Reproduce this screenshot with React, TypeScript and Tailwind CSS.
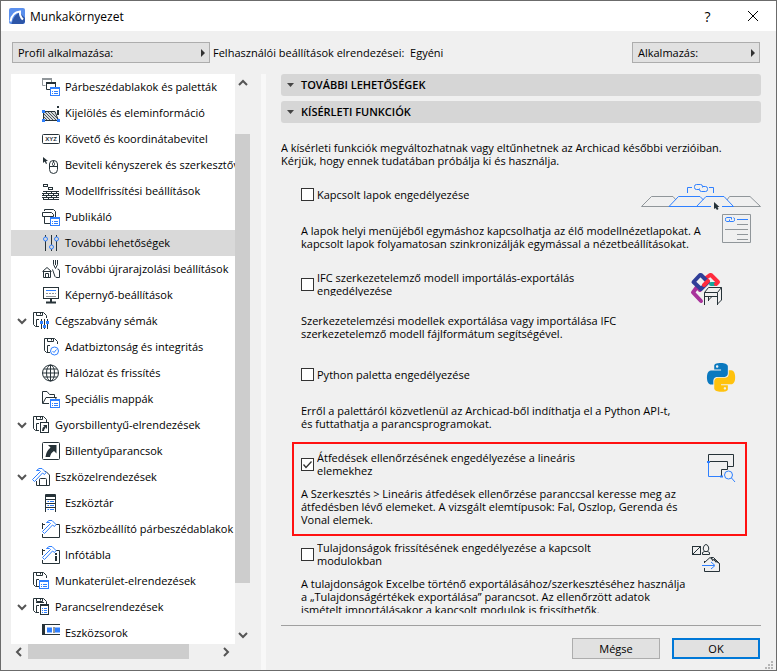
import type { ReactNode } from "react";
import clsx from "clsx";

const INK = "#263238";
const BLUE = "#2f80ff";
const GRAY = "#90969a";

function Icon({ children }: { children: ReactNode }) {
	return (
		<svg width="18" height="18" viewBox="0 0 18 18" fill="none" stroke={INK} className="shrink-0">
			{children}
		</svg>
	);
}

// shared pieces of the tree icons

const Floppy = ({ x = 1 }: { x?: number }) => (
	<g transform={`translate(${x} 0)`}>
		<path d="M6 14.5H2.5L.5 12.5V.5H10.5L13.5 3.5V6" />
		<path d="M3.5 .5V3.5H9.5V.5M7.5 1V2.5M3.5 14V7.5H6" />
	</g>
);

const MiniWindow = ({ x = 8, y = 9 }: { x?: number; y?: number }) => (
	<g transform={`translate(${x} ${y})`} stroke={BLUE}>
		<rect x=".5" y=".5" width="9" height="8" fill="#fff" />
		<path d="M0 1H10" strokeWidth="2" />
		<path d="M2 4.5H3M4 4.5H8M2 6.5H3M4 6.5H8" />
	</g>
);

const Hammer = () => (
	<path d="M4.5 2.5L7 .5H10L14 4.5L12.5 6.5L10.5 5L2.5 13.5L.5 11.5L8.5 3.5L7.5 2.5Z" stroke={BLUE} fill="#fff" />
);

const icons: Record<string, ReactNode> = {
	windows: (
		<>
			<path d="M3.5 7.5H.5V1.5H9.5V4" stroke={GRAY} />
			<path d="M0 1H10" stroke={GRAY} strokeWidth="2" />
			<path d="M8 11.5H4.5V5.5H13.5V9" />
			<path d="M4 5H14" strokeWidth="2" />
			<MiniWindow />
		</>
	),
	selection: (
		<>
			<path d="M1.5 7.5H13L16.5 16.5H1.5Z" fill="#d5d8da" />
			<path d="M3 8L11.5 16.5M6 8L14.5 16.5M9 8L16 15M2 10L8.5 16.5M2 13L5.5 16.5" strokeWidth=".8" />
			<path d="M16 2V4M16 6V11" strokeWidth="2" />
			<path d="M0 7.5H3M0 16.5H3M15 16.5H18" stroke={BLUE} strokeWidth="3" />
		</>
	),
	xyz: (
		<>
			<rect x=".5" y="4.5" width="17" height="9" rx="1" />
			<text x="9" y="11" fontSize="6" fontWeight="700" textAnchor="middle" fill={INK} stroke="none" fontFamily="Liberation Sans, sans-serif">XYZ</text>
		</>
	),
	mouse: (
		<>
			<path d="M1 1V7L2.7 5.5L4 8L5 7.5L4 5H6Z" fill={INK} stroke="none" />
			<path d="M7.5 8Q7.5 4.5 11.5 4.5Q15.5 4.5 15.5 8V13.5Q15.5 17.5 11.5 17.5Q7.5 17.5 7.5 13.5Z" />
			<path d="M7.5 10.5H15.5M11.5 4.5V6" />
			<rect x="10.5" y="6.5" width="2" height="3" rx="1" />
		</>
	),
	bricks: (
		<>
			<rect x="1.5" y="2.5" width="4" height="2" />
			<rect x="6.5" y="5.5" width="4" height="2" />
			<path d="M1 9.5H17M0 11.5H17M0 13.5H17M0 15.5H17M1 17.5H17M4.5 9.5V11.5M9.5 9.5V11.5M14.5 9.5V11.5M1.5 11.5V13.5M6.5 11.5V13.5M11.5 11.5V13.5M16.5 11.5V13.5M4.5 13.5V15.5M9.5 13.5V15.5M14.5 13.5V15.5M1.5 15.5V17.5M6.5 15.5V17.5M11.5 15.5V17.5" />
		</>
	),
	publish: (
		<>
			<path d="M2.5 3V1.5H11.5L13.5 3.5V9M2.5 9V15.5H8" />
			<path d="M.5 4.5H9.5L11.5 6.5V8.5H.5Z" />
			<MiniWindow />
		</>
	),
	sliders: (
		<>
			<path d="M3.5 1V3M3.5 7V17M9.5 1V11M9.5 15V17M14.5 1V3M14.5 7V17" />
			<g stroke={BLUE}>
				<circle cx="3.5" cy="5" r="2" />
				<circle cx="9.5" cy="13" r="2" />
				<circle cx="14.5" cy="5" r="2" />
			</g>
		</>
	),
	redraw: (
		<>
			<path d="M.5 11.5L5 7.5L9.5 11.5M1.5 11V17.5H8.5V11M3.5 17.5V13.5H6.5V17.5M2 11.5H8" />
			<path d="M11.5 0V4.5L13.5 8.5L15.5 4.5V0M13.5 0V5M10.5 9.5L13 16.5Q13.5 17.5 15 17.5H17.5V11Q17.5 9 15.5 9" />
		</>
	),
	screen: (
		<>
			<rect x="1.5" y="1.5" width="15" height="11" />
			<path d="M4 4.5H14" stroke={BLUE} />
			<path d="M4 7.5H14" stroke={GRAY} strokeDasharray="2 1" />
			<path d="M4 10.5H14" stroke={GRAY} />
			<path d="M9 13V16M4 16.5H14" strokeWidth="2" />
		</>
	),
	schemes: (
		<>
			<Floppy />
			<path d="M9.5 7V17M12.5 7V17M15.5 7V17" />
			<g stroke={BLUE} strokeWidth="3">
				<path d="M8 10.5H11M11 14.5H14M14 10.5H17" />
			</g>
		</>
	),
	security: (
		<>
			<Floppy x={2} />
			<circle cx="12.5" cy="13" r="4" stroke={BLUE} fill="#fff" />
			<path d="M10.5 13L12 14.5L14.5 11.5" stroke={BLUE} />
		</>
	),
	globe: (
		<>
			<circle cx="8.5" cy="9" r="8" />
			<ellipse cx="8.5" cy="9" rx="4" ry="8" />
			<path d="M8.5 1V17M.5 9H16.5M2 5H15M2 13H15" />
		</>
	),
	folder: (
		<>
			<path d="M7 13.5H.5V1.5H5L7.5 4.5H12.5V7.5M1 13L4 7.5H14.5L13.5 9" />
			<MiniWindow />
		</>
	),
	shortcutScheme: (
		<>
			<Floppy />
			<rect x="8.5" y="6.5" width="8" height="10" fill="#fff" />
			<path d="M11 15Q11 12 13 11" strokeWidth="2" />
			<path d="M11 9H15V13Z" fill={INK} stroke="none" />
		</>
	),
	shortcut: (
		<>
			<rect x=".5" y=".5" width="17" height="17" rx="1" />
			<path d="M6 3H14.5V11.5L12 9Q8.5 11 8 15H3.5Q4 9.5 8.5 5.5Z" fill={INK} stroke="none" />
		</>
	),
	toolScheme: (
		<>
			<path d="M12 3.5H14L17.5 7V17.5H4.5V13M7.5 17.5V11.5Q7.5 10.5 8.5 10.5H13.5Q14.5 10.5 14.5 11.5V17.5" />
			<Hammer />
		</>
	),
	toolbox: (
		<>
			<path d="M3.5 18V.5H13.5V18M3 5.5H14M3 9.5H14M3 13.5H14" />
			<path d="M3 2H14" strokeWidth="2" />
			<path d="M5.5 7.5H7M8 7.5H12M5.5 11.5H7M8 11.5H12M5.5 15.5H7M8 15.5H12" stroke={BLUE} />
		</>
	),
	toolSettings: (
		<>
			<path d="M.5 3V9M.5 14V17.5H17.5V4.5H14M.5 4.5H3" />
			<Hammer />
		</>
	),
	infoBox: (
		<>
			<path d="M.5 3V9M.5 14V17.5H17.5V4.5H14M.5 4.5H3" />
			<Hammer />
			<path d="M14 7V9M14 10V15" strokeWidth="2" />
		</>
	),
	workspace: (
		<>
			<Floppy />
			<MiniWindow x={7} y={8} />
		</>
	),
	commands: (
		<>
			<Floppy />
			<path d="M4 4.5H12" />
			<rect x="8.5" y="6.5" width="8" height="10" fill="#fff" />
			<path d="M8 7H17" strokeWidth="2" />
			<path d="M10 10.5H11M12 10.5H15M10 12.5H11M12 12.5H15M10 14.5H11M12 14.5H15" stroke={BLUE} />
		</>
	),
	toolbars: (
		<>
			<path d="M0 .5H18M0 10.5H18M2.5 1V10M12 3V9" />
			<path d="M1.5 0V11" strokeWidth="3" />
			<path d="M5 6H10M13 6H18" stroke={BLUE} strokeWidth="5" />
		</>
	),
};

type TreeItem = { icon: string; label: string; level?: number; open?: boolean; selected?: boolean };

const tree: TreeItem[] = [
	{ icon: "windows", label: "Párbeszédablakok és paletták" },
	{ icon: "selection", label: "Kijelölés és eleminformáció" },
	{ icon: "xyz", label: "Követő és koordinátabevitel" },
	{ icon: "mouse", label: "Beviteli kényszerek és szerkesztővonalak" },
	{ icon: "bricks", label: "Modellfrissítési beállítások" },
	{ icon: "publish", label: "Publikáló" },
	{ icon: "sliders", label: "További lehetőségek", selected: true },
	{ icon: "redraw", label: "További újrarajzolási beállítások" },
	{ icon: "screen", label: "Képernyő-beállítások" },
	{ icon: "schemes", label: "Cégszabvány sémák", level: 1, open: true },
	{ icon: "security", label: "Adatbiztonság és integritás" },
	{ icon: "globe", label: "Hálózat és frissítés" },
	{ icon: "folder", label: "Speciális mappák" },
	{ icon: "shortcutScheme", label: "Gyorsbillentyű-elrendezések", level: 1, open: true },
	{ icon: "shortcut", label: "Billentyűparancsok" },
	{ icon: "toolScheme", label: "Eszközelrendezések", level: 1, open: true },
	{ icon: "toolbox", label: "Eszköztár" },
	{ icon: "toolSettings", label: "Eszközbeállító párbeszédablakok" },
	{ icon: "infoBox", label: "Infótábla" },
	{ icon: "workspace", label: "Munkaterület-elrendezések", level: 1 },
	{ icon: "commands", label: "Parancselrendezések", level: 1, open: true },
	{ icon: "toolbars", label: "Eszközsorok" },
];

function Chevron({ className }: { className?: string }) {
	return (
		<svg width="10" height="10" viewBox="0 0 10 10" fill="none" stroke="#555" strokeWidth="2" className={clsx("shrink-0", className)}>
			<path d="M1 3L5 7L9 3" />
		</svg>
	);
}

function TreeRow({ item }: { item: TreeItem }) {
	const parent = item.level === 1;
	return (
		<li>
			<button
				className={clsx(
					"flex h-[26px] w-full items-center gap-[5px] whitespace-nowrap text-left",
					parent ? "pl-[6px]" : "pl-[31px]",
					item.selected && "bg-[#d9d9d9]"
				)}
			>
				{parent && (item.open ? <Chevron /> : <span className="w-[10px]"></span>)}
				<Icon>{icons[item.icon]}</Icon>
				<span className="pb-[2px]">{item.label}</span>
			</button>
		</li>
	);
}

const Chain = () => (
	<path d="M5 5.5H2.5Q.5 5.5 .5 3.5V2.5Q.5 .5 2.5 .5H6.5Q8.5 .5 8.5 2.5V3.5M8.5 2.5H11.5Q13.5 2.5 13.5 4.5V5.5Q13.5 7.5 11.5 7.5H7.5Q5.5 7.5 5.5 5.5V4.5" />
);

// all illustrations share one 120px wide canvas on the right of the option
function Art({ children }: { children: ReactNode }) {
	return (
		<svg width="120" height="63" viewBox="0 -1 120 63" fill="none" stroke={INK} className="shrink-0">
			{children}
		</svg>
	);
}

const tabsArt = (
	<Art>
		<path d="M28 24.5H.5L10.5 14.5H32L35 18M86 18L88.5 14.5H109L119.5 24.5H92" stroke={GRAY} />
		<g stroke={BLUE}>
			<path d="M70 24.5H28L37.5 14.5H59L62.5 18M55.5 24.5L65 14.5H83L92.5 24.5H81" />
			<path d="M46.5 11V5.5H51M68 5.5H72.5V11" />
			<g transform="translate(53 2)"><Chain /></g>
			<path d="M96 37.5H107" />
			<path d="M88 39.5H85.5Q84.5 39.5 84.5 37.5Q84.5 35.5 85.5 35.5H90.5V37.5M88.5 37.5V39.5H92.5Q93.5 39.5 93.5 37.5Q93.5 35.5 92.5 35.5" />
		</g>
		<path d="M73 20V27L74.5 26L76 28L77.5 27L76.5 25H78.5Z" fill={INK} stroke="none" />
		<path d="M81.5 32.5H109.5V60.5H81.5ZM96 42.5H107M84 47.5H107M96 52.5H107M96 57.5H107" stroke={GRAY} />
	</Art>
);

const ifcArt = (
	<Art>
		<g strokeWidth="4" strokeLinejoin="round" strokeLinecap="round">
			<path d="M56 15L52 20.5L60 29" stroke="#a8329a" />
			<path d="M56 15L59 18" stroke="#a8329a" />
			<path d="M70 12H74" stroke="#15a79b" />
			<path d="M65 6L69 3H70L77 10L75 12" stroke="#ff2b3d" />
			<path d="M59 3H60L67 10L60 17L52.500 10Z" stroke="#303e98" />
			<path d="M63 13L67 9" stroke="#ff2b3d" />
		</g>
		<path d="M63.5 33V20.5L67.5 15.5H80.5V28L76.5 33Z" fill="#f0f0f0" stroke="none" />
		<path d="M63.5 33V20.5L67.5 15.5H80.5V28L76.5 32M63.5 20.5H76.5L80.5 15.5M63.5 24.5H76.5M67.5 24.5V29M67.500 28L71 24.500M76.5 33V20.5" />
	</Art>
);

const snake = "M14.25.18l.9.2.73.26.59.3.45.32.34.34.25.34.16.33.1.3.04.26.02.2-.01.13V8.5l-.05.63-.13.55-.21.46-.26.38-.3.31-.33.25-.35.19-.35.14-.33.1-.3.07-.26.04-.21.02H8.77l-.69.05-.59.14-.5.22-.41.27-.33.32-.27.35-.2.36-.15.37-.1.35-.07.32-.04.27-.02.21v3.06H3.17l-.21-.03-.28-.07-.32-.12-.35-.18-.36-.26-.36-.36-.35-.46-.32-.59-.28-.73-.21-.88-.14-1.05-.05-1.23.06-1.22.16-1.04.24-.87.32-.71.36-.57.4-.44.42-.33.42-.24.4-.16.36-.1.32-.05.24-.01h.16l.06.01h8.16v-.83H6.18l-.01-2.75-.02-.37.05-.34.11-.31.17-.28.25-.26.31-.23.38-.2.44-.18.51-.15.58-.12.64-.1.71-.06.77-.04.84-.02 1.27.05zm-6.3 1.98l-.23.33-.08.41.08.41.23.34.33.22.41.09.41-.09.33-.22.23-.34.08-.41-.08-.41-.23-.33-.33-.22-.41-.09-.41.09z";

const pythonArt = (
	<Art>
		<g transform="translate(66 1) scale(1.17 1.2)" stroke="none">
			<path d={snake} fill="#0b79bf" />
			<path d={snake} fill="#ffc20e" transform="rotate(180 12 12)" />
		</g>
	</Art>
);

const overlapArt = (
	<Art>
		<path d="M67.5 9V2.5H92.5V14.5H86.5M67.5 9.5H86.5V17.5H80.5V24" />
		<g stroke={BLUE}>
			<path d="M67.5 10V24.5H81" />
			<path d="M66 10H69M79 24.5H82" strokeWidth="2" />
			<circle cx="87.5" cy="23" r="4" />
			<path d="M90.5 26L94 30" />
		</g>
	</Art>
);

const moduleArt = (
	<Art>
		<rect x="51.5" y="4.5" width="8" height="8" />
		<path d="M51.5 12.5L59.5 4.5" />
		<path d="M63.5 9.5Q61.5 7 62.5 5Q63.5 2.5 65 2.5Q66.5 2.5 67.5 5Q68.5 7 66.5 9.5M61.5 12.5V10.5L63.5 9.5H66.5L68.5 10.5V12.5Z" />
		<path d="M63.5 19V21M63.5 26V29.5H78.5V21.5L69 15.5L63.5 20.5M70 15.5H72.500L78.5 21.5M70 16L72 19M73 17L75 20.500" />
		<path d="M61 23.5H73M70 20L74 23.5L70 27" stroke={BLUE} />
	</Art>
);

type Option = { id: string; label: string[]; text: string[]; art: ReactNode; checked?: boolean };

const options: Option[] = [
	{
		id: "tabs",
		label: ["Kapcsolt lapok engedélyezése"],
		text: [
			"A lapok helyi menüjéből egymáshoz kapcsolhatja az élő modellnézetlapokat. A",
			"kapcsolt lapok folyamatosan szinkronizálják egymással a nézetbeállításokat.",
		],
		art: tabsArt,
	},
	{
		id: "ifc",
		label: ["IFC szerkezetelemző modell importálás-exportálás", "engedélyezése"],
		text: ["Szerkezetelemzési modellek exportálása vagy importálása IFC", "szerkezetelemző modell fájlformátum segítségével."],
		art: ifcArt,
	},
	{
		id: "python",
		label: ["Python paletta engedélyezése"],
		text: ["Erről a palettáról közvetlenül az Archicad-ből indíthatja el a Python API-t,", "és futtathatja a parancsprogramokat."],
		art: pythonArt,
	},
	{
		id: "overlap",
		label: ["Átfedések ellenőrzésének engedélyezése a lineáris", "elemekhez"],
		text: [
			"A Szerkesztés > Lineáris átfedések ellenőrzése paranccsal keresse meg az",
			"átfedésben lévő elemeket. A vizsgált elemtípusok: Fal, Oszlop, Gerenda és",
			"Vonal elemek.",
		],
		art: overlapArt,
		checked: true,
	},
	{
		id: "modules",
		label: ["Tulajdonságok frissítésének engedélyezése a kapcsolt", "modulokban"],
		text: [
			"A tulajdonságok Excelbe történő exportálásához/szerkesztéséhez használja",
			"a „Tulajdonságértékek exportálása” parancsot. Az ellenőrzött adatok",
			"ismételt importálásakor a kapcsolt modulok is frissíthetők.",
		],
		art: moduleArt,
	},
];

const Lines = ({ lines }: { lines: string[] }) => (
	<>
		{lines.map((line) => (
			<span key={line} className="block whitespace-nowrap">{line}</span>
		))}
	</>
);

function OptionItem({ option }: { option: Option }) {
	return (
		<div className="relative pb-[15px]">
			<div className="flex h-[26px] items-start justify-between">
				<div className="flex h-[26px] items-center gap-[3px]">
					<span className="relative flex">
						<input
							id={option.id}
							type="checkbox"
							defaultChecked={option.checked}
							className="peer size-[13px] appearance-none border border-[#333] bg-white"
						/>
						<svg viewBox="0 0 13 13" fill="none" stroke="#333" className="pointer-events-none absolute inset-0 hidden size-[13px] peer-checked:block">
							<path d="M2.5 6.5L5 9.5L10.5 3.5" strokeWidth="1.3" />
						</svg>
					</span>
					<label htmlFor={option.id} className="flex h-[26px] flex-col justify-center [clip-path:inset(0_0_1px_0)]">
						<Lines lines={option.label} />
					</label>
				</div>
				{option.art}
			</div>
			<div className="mt-[10px] flex h-[39px] flex-col justify-center">
				<Lines lines={option.text} />
			</div>
			{option.checked && <div className="pointer-events-none absolute -top-[9px] right-[14px] bottom-[5px] -left-[9px] border-2 border-[#f11]"></div>}
		</div>
	);
}

function SectionHeader({ title }: { title: string }) {
	return (
		<button className="flex h-[22px] w-full shrink-0 items-center gap-[7px] rounded-[3px] bg-[#d6d6d6] pl-[6px] text-left font-semibold">
			<svg width="7" height="4" viewBox="0 0 7 4" fill="#444"><path d="M0 0H7L3.5 4Z" /></svg>
			<span className="pb-[2px]">{title}</span>
		</button>
	);
}

function PopupButton({ label, className }: { label: string; className: string }) {
	return (
		<button className={clsx("flex h-[21px] items-center justify-between border border-[#adadad] bg-[#e1e1e1] pr-[4px] pl-[5px]", className)}>
			{label}
			<svg width="4" height="8" viewBox="0 0 4 8" fill="#333"><path d="M0 0L4 4L0 8Z" /></svg>
		</button>
	);
}

export default function App() {
	return (
		<div className="flex h-screen flex-col border border-[#6b6b6b] bg-[#f0f0f0] font-['Open_Sans','Noto_Sans',sans-serif] text-[11px] leading-[13px] text-black">
			<header className="flex h-[30px] shrink-0 items-center bg-white pl-[8px] text-[12px]">
				<svg width="16" height="16" viewBox="0 0 16 16" fill="none">
					<rect width="16" height="16" rx="2" fill="#5b90ee" />
					<path d="M2.5 16Q4 8 10.5 4.5L16 10V14L14 16Z" fill="#2d56a8" />
					<path d="M1.5 13.5Q3 4 11 3.5Q10.5 8.5 14 11.5" stroke="#fff" strokeWidth="2" />
				</svg>
				<h1 className="ml-[5px] flex-1">Munkakörnyezet</h1>
				<button className="w-[45px] text-[14px]" aria-label="Súgó">?</button>
				<button className="flex w-[46px] justify-center" aria-label="Bezárás">
					<svg width="10" height="10" viewBox="0 0 10 10" stroke="#000"><path d="M0 0L10 10M10 0L0 10" /></svg>
				</button>
			</header>

			<div className="mt-[11px] flex shrink-0 items-center pr-[16px] pl-[11px]">
				<PopupButton label="Profil alkalmazása:" className="w-[198px]" />
				<p className="ml-[3px] flex-1">Felhasználói beállítások elrendezései:&nbsp; Egyéni</p>
				<PopupButton label="Alkalmazás:" className="w-[128px]" />
			</div>

			<div className="mt-[11px] flex min-h-0 flex-1">
				<nav className="mb-[11px] ml-[10px] flex w-[239px] shrink-0 flex-col">
					<div className="flex min-h-0 flex-1">
						<ul className="min-w-0 flex-1 overflow-hidden bg-white">
							{tree.map((item) => (
								<TreeRow key={item.label} item={item} />
							))}
						</ul>
						<div className="flex w-[15px] shrink-0 flex-col items-center py-[4px]">
							<Chevron className="rotate-180" />
							<div className="mt-[46px] mb-[47px] w-full flex-1 bg-[#cdcdcd]"></div>
							<Chevron />
						</div>
					</div>
					<div className="flex h-[15px] shrink-0 items-center pr-[19px] pl-[3px]">
						<Chevron className="rotate-90" />
						<div className="mr-[32px] ml-[4px] h-full flex-1 bg-[#cdcdcd]"></div>
						<Chevron className="-rotate-90" />
					</div>
				</nav>

				<div className="ml-[11px] w-[5px] shrink-0 bg-[#f8f8f8]"></div>

				<main className="ml-[15px] flex min-w-0 flex-1 flex-col pr-[15px]">
					<SectionHeader title="TOVÁBBI LEHETŐSÉGEK" />
					<div className="h-[5px] shrink-0"></div>
					<SectionHeader title="KÍSÉRLETI FUNKCIÓK" />
					<div className="min-h-0 flex-1 overflow-hidden pt-[18px]">
						<Lines
							lines={[
								"A kísérleti funkciók megváltozhatnak vagy eltűnhetnek az Archicad későbbi verzióiban.",
								"Kérjük, hogy ennek tudatában próbálja ki és használja.",
							]}
						/>
						<div className="mt-[14px] pl-[20px]">
							{options.map((option) => (
								<OptionItem key={option.id} option={option} />
							))}
						</div>
					</div>
					<footer className="relative mt-[12px] flex shrink-0 justify-end gap-[12px] border-t border-[#a0a0a0] pt-[12px] pr-[1px] pb-[11px]">
						<button className="h-[21px] w-[88px] border border-[#adadad] bg-[#e1e1e1]">Mégse</button>
						<button className="h-[21px] w-[88px] border-2 border-[#0078d7] bg-[#e1e1e1]">OK</button>
						<svg width="8" height="8" viewBox="0 0 8 8" fill="#b5b5b5" className="absolute -right-[12px] bottom-[1px]">
							<path d="M6 0H8V2H6ZM3 3H5V5H3ZM6 3H8V5H6ZM0 6H2V8H0ZM3 6H5V8H3ZM6 6H8V8H6Z" />
						</svg>
					</footer>
				</main>
			</div>
		</div>
	);
}
